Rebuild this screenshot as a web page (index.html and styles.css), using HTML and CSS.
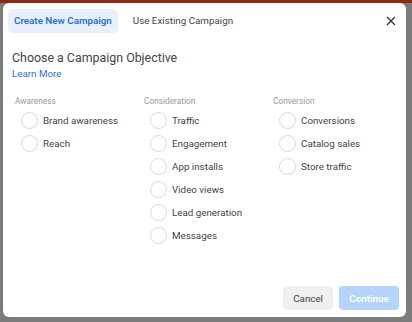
FILE: index.html
```html
<!DOCTYPE html>
<html>
<head>
    <meta charset="utf-8">
    <title>Create Campaign</title>
    <link rel="stylesheet" href="styles.css">
</head>
<body>
    <div class="dialog">
        <div class="dialog-header">
            <div class="tab active">Create New Campaign</div>
            <div class="tab">Use Existing Campaign</div>
            <button class="close" aria-label="Close">
                <svg width="10" height="10" viewBox="0 0 10 10">
                    <path d="M1 1L9 9M9 1L1 9" stroke="#333" stroke-width="1.3" fill="none"/>
                </svg>
            </button>
        </div>

        <h2 class="title">Choose a Campaign Objective</h2>
        <a href="#" class="learn-more">Learn More</a>

        <div class="objectives">
            <div class="column">
                <div class="column-label">Awareness</div>
                <label class="option"><span class="radio"></span>Brand awareness</label>
                <label class="option"><span class="radio"></span>Reach</label>
            </div>
            <div class="column">
                <div class="column-label">Consideration</div>
                <label class="option"><span class="radio"></span>Traffic</label>
                <label class="option"><span class="radio"></span>Engagement</label>
                <label class="option"><span class="radio"></span>App installs</label>
                <label class="option"><span class="radio"></span>Video views</label>
                <label class="option"><span class="radio"></span>Lead generation</label>
                <label class="option"><span class="radio"></span>Messages</label>
            </div>
            <div class="column">
                <div class="column-label">Conversion</div>
                <label class="option"><span class="radio"></span>Conversions</label>
                <label class="option"><span class="radio"></span>Catalog sales</label>
                <label class="option"><span class="radio"></span>Store traffic</label>
            </div>
        </div>

        <div class="dialog-footer">
            <button class="btn btn-cancel">Cancel</button>
            <button class="btn btn-continue" disabled>Continue</button>
        </div>
    </div>
</body>
</html>
```

FILE: styles.css
```css
body {
    font-family: Roboto, "Liberation Sans", sans-serif;
    background: #7c7c7c;
    border-top: 3px solid #8a2b12;
    margin: 0;
    padding: 0 0 0 3px;
    height: 319px;
}
.dialog {
    width: 403px;
    height: 314px;
    background: white;
    border-radius: 6px;
    box-sizing: border-box;
    padding: 6px 10px 0 5px;
    display: flex;
    flex-direction: column;
    color: #444;
}
.dialog-header {
    display: flex;
    align-items: center;
    height: 24px;
}
.tab {
    font-size: 9.8px;
    line-height: 24px;
    padding: 0 6px;
    border-radius: 5px;
    color: #444;
}
.tab.active {
    background: #e7f0fc;
    color: #2d6fd8;
    font-weight: 600;
    margin-right: 9px;
}
.close {
    margin-left: auto;
    background: none;
    border: none;
    padding: 0;
    width: 12px;
    height: 12px;
    display: flex;
    align-items: center;
    justify-content: center;
    margin-right: -1px;
}
.title {
    font-size: 12.4px;
    font-weight: 400;
    margin: 16px 0 0 4px;
    line-height: 18px;
}
.learn-more {
    font-size: 9.8px;
    color: #2d6fd8;
    text-decoration: none;
    margin-left: 4px;
    line-height: 14px;
}
.objectives {
    display: grid;
    grid-template-columns: 129px 129px 129px;
    margin: 15px 0 0 7px;
}
.column {
    display: flex;
    flex-direction: column;
}
.column-label {
    font-size: 8.3px;
    color: #999;
    line-height: 11px;
    margin-bottom: 2px;
}
.option {
    display: flex;
    align-items: center;
    height: 23px;
    font-size: 9.8px;
    color: #444;
    padding-left: 6px;
}
.radio {
    width: 15px;
    height: 15px;
    border: 1px solid #d8d8d8;
    border-radius: 50%;
    margin-right: 5px;
}
.dialog-footer {
    margin-top: auto;
    display: flex;
    justify-content: flex-end;
    gap: 6px;
    padding-bottom: 7px;
    margin-right: -3px;
}
.btn {
    font-family: inherit;
    font-size: 9.8px;
    height: 24px;
    border: none;
    border-radius: 4px;
    padding: 0 10px;
}
.btn-cancel {
    background: #f0f0f0;
    color: #444;
}
.btn-continue {
    background: #b4d4fb;
    color: white;
    font-weight: 600;
    width: 60px;
}
```
